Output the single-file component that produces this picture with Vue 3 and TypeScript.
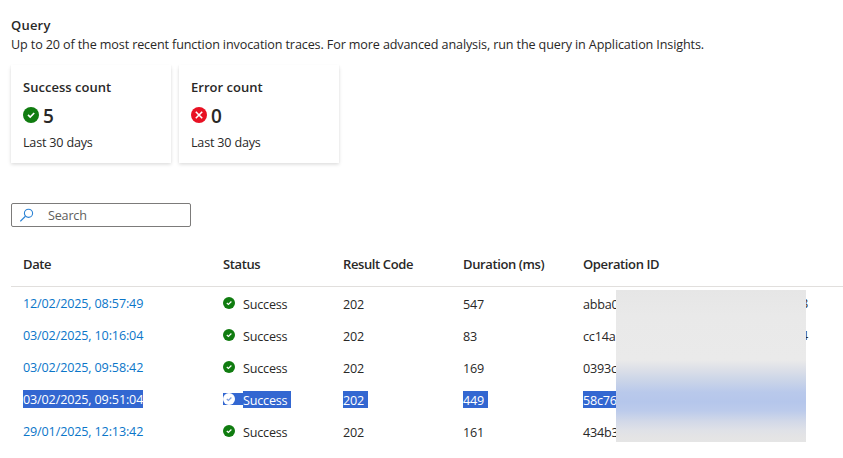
<script setup lang="ts">
interface Trace {
  date: string
  code: string
  duration: string
  operation: string
  tail?: string
  selected?: boolean
}

const cards = [
  { title: 'Success count', value: 5, kind: 'success' },
  { title: 'Error count', value: 0, kind: 'error' },
]

const traces: Trace[] = [
  { date: '12/02/2025, 08:57:49', code: '202', duration: '547', operation: 'abba0', tail: '8' },
  { date: '03/02/2025, 10:16:04', code: '202', duration: '83', operation: 'cc14a', tail: '4' },
  { date: '03/02/2025, 09:58:42', code: '202', duration: '169', operation: '0393c' },
  { date: '03/02/2025, 09:51:04', code: '202', duration: '449', operation: '58c76', selected: true },
  { date: '29/01/2025, 12:13:42', code: '202', duration: '161', operation: '434b3' },
]
</script>

<template>
  <main class="page">
    <h1 class="title">Query</h1>
    <p class="description">Up to 20 of the most recent function invocation traces. For more advanced analysis, run the query in Application Insights.</p>

    <section class="cards">
      <article v-for="card in cards" :key="card.title" class="card">
        <h2>{{ card.title }}</h2>
        <div class="metric">
          <svg class="metric-icon" viewBox="0 0 16 16">
            <template v-if="card.kind === 'success'">
              <circle cx="8" cy="8" r="8" fill="#107c10" />
              <path d="M5 7.9 7.2 10 11.2 6" fill="none" stroke="#fff" stroke-width="1.7" />
            </template>
            <template v-else>
              <circle cx="8" cy="8" r="8" fill="#e81123" />
              <path d="M4.8 4.8 11.2 11.2M11.2 4.8 4.8 11.2" fill="none" stroke="#fff" stroke-width="1.6" />
            </template>
          </svg>
          <span class="value">{{ card.value }}</span>
        </div>
        <p>Last 30 days</p>
      </article>
    </section>

    <label class="search">
      <svg viewBox="0 0 14 14" width="14" height="14">
        <circle cx="8.5" cy="5.3" r="4.1" fill="none" stroke="#2b82d4" stroke-width="1.1" />
        <path d="M5.4 8.3.3 13.2" fill="none" stroke="#2b82d4" stroke-width="1.2" />
      </svg>
      <span>Search</span>
    </label>

    <section class="table">
      <div class="row head">
        <span>Date</span>
        <span>Status</span>
        <span>Result Code</span>
        <span>Duration (ms)</span>
        <span>Operation ID</span>
      </div>
      <div v-for="trace in traces" :key="trace.date" class="row" :class="{ selected: trace.selected }">
        <a class="date"><span>{{ trace.date }}</span></a>
        <div class="status">
          <span class="status-mark">
            <svg viewBox="0 0 12 12" width="12" height="12">
              <circle cx="6" cy="6" r="6" :fill="trace.selected ? '#fff' : '#107c10'" />
              <path d="M3.8 6 5.4 7.5 8.4 4.5" fill="none" :stroke="trace.selected ? '#7f9edf' : '#fff'" stroke-width="1.2" />
            </svg>
          </span>
          <span class="mark">Success</span>
        </div>
        <div class="cell"><span class="mark">{{ trace.code }}</span></div>
        <div class="cell"><span class="mark">{{ trace.duration }}</span></div>
        <div class="cell">
          <span class="mark">{{ trace.operation }}</span>
          <span v-if="trace.tail" class="tail">{{ trace.tail }}</span>
        </div>
      </div>
      <div class="redaction"></div>
    </section>
  </main>
</template>

<style>
body {
  background: #fff;
}
</style>

<style scoped>
.page {
  box-sizing: border-box;
  width: 843px;
  height: 458px;
  padding: 15px 0 0 11px;
  overflow: hidden;
  color: #292827;
  font: 12.6px/20px "Segoe UI", "Open Sans", "Noto Sans", sans-serif;
  letter-spacing: -0.2px;
}
h1, h2, p {
  margin: 0;
}
.title {
  height: 20px;
  font-size: 13px;
  font-weight: 600;
  line-height: 20px;
  letter-spacing: 0.2px;
}
.description {
  height: 20px;
  line-height: 19px;
  letter-spacing: -0.127px;
  white-space: nowrap;
}
.cards {
  display: flex;
  gap: 8px;
  padding-top: 10px;
}
.card {
  box-sizing: border-box;
  width: 160px;
  height: 98px;
  padding: 12px;
  background: #fff;
  box-shadow: 0 1.6px 3.6px rgba(0, 0, 0, 0.15), 0 0.3px 1px rgba(0, 0, 0, 0.12);
}
.card h2 {
  font-size: 13px;
  font-weight: 600;
  line-height: 20px;
  letter-spacing: 0.03px;
}
.metric {
  display: flex;
  align-items: center;
  gap: 4px;
  height: 36px;
}
.metric-icon {
  width: 16px;
  height: 16px;
}
.value {
  padding-top: 2px;
  font-size: 19px;
  font-weight: 600;
  line-height: 34px;
}
.card p {
  line-height: 20px;
}
.search {
  display: flex;
  align-items: center;
  box-sizing: border-box;
  width: 180px;
  height: 24px;
  margin-top: 40px;
  padding-left: 8px;
  border: 1px solid #7c7b7a;
  border-radius: 2px;
  color: #605e5c;
}
.search span {
  margin-left: 14px;
  padding-top: 2px;
}
.table {
  position: relative;
  margin-top: 16px;
}
.row {
  display: grid;
  grid-template-columns: 200px 120px 120px 120px 1fr;
  align-items: center;
  height: 32px;
  padding-left: 12px;
}
.head {
  box-sizing: border-box;
  height: 44px;
  padding-bottom: 2px;
  border-bottom: 1px solid #e1dfdd;
  font-size: 13px;
  font-weight: 600;
  letter-spacing: -0.38px;
}
.date {
  display: flex;
  align-items: center;
  height: 18px;
  color: #0b76c9;
  letter-spacing: -0.15px;
}
.status {
  display: flex;
  align-items: center;
  height: 20px;
}
.status-mark {
  display: flex;
  width: 20px;
  height: 12px;
  margin-top: -1px;
}
.mark {
  display: inline-block;
  height: 17px;
  line-height: 19px;
}
.selected .mark,
.selected .date span,
.selected .status-mark {
  color: #fff;
  background: #3367d1;
}
.selected .mark {
  padding-right: 4px;
}
.date span {
  display: inline-block;
  height: 18px;
  line-height: 19px;
}
.cell {
  position: relative;
  display: flex;
  align-items: center;
  height: 20px;
}
.tail {
  position: absolute;
  top: 1px;
  right: 35px;
}
.redaction {
  position: absolute;
  top: 47px;
  left: 605px;
  width: 190px;
  height: 152px;
  background: linear-gradient(180deg, #e6e6e6 0, #e9e9e9 26px, #eaeaea 70px, #dde0e8 79px, #cbd5e8 90px, #b9c9eb 102px, #b5c6eb 112px, #bccbeb 121px, #d1d8e8 131px, #dfe1e7 140px, #e4e4e5 147px, #e5e5e5 152px);
}
</style>
